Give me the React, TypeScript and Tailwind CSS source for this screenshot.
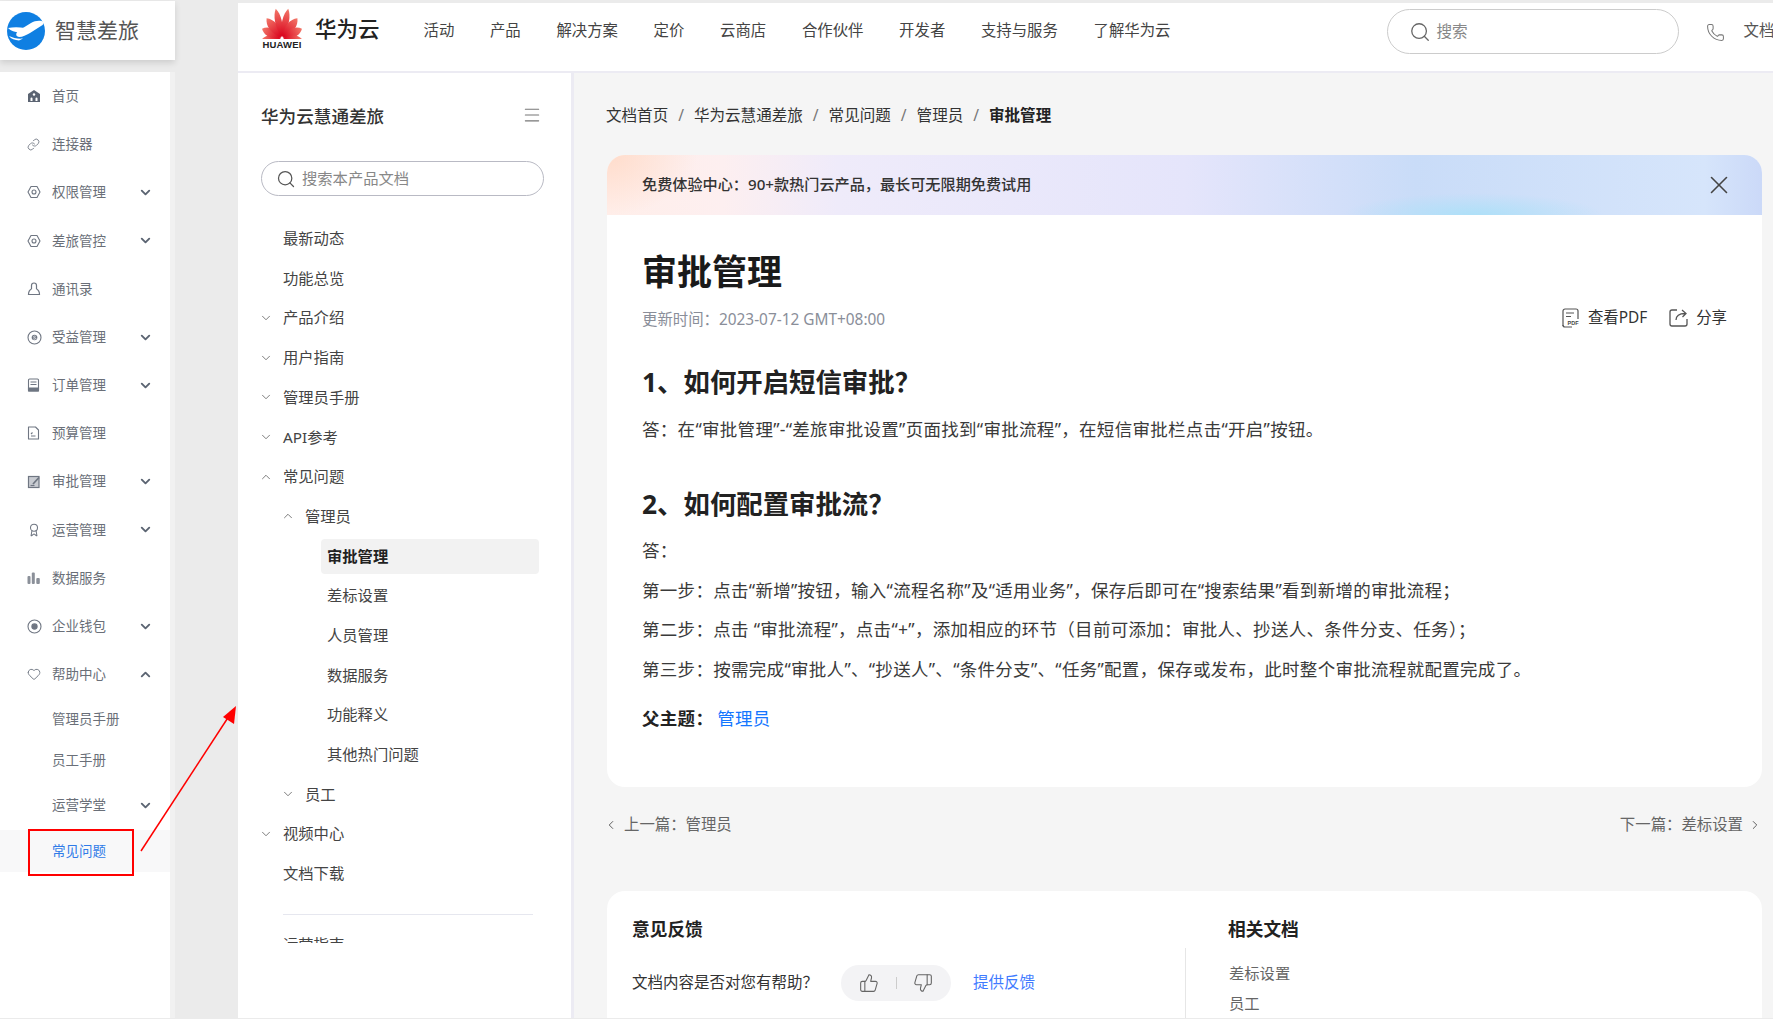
import { ReactNode } from "react";
import { ChevronDown, ChevronLeft, ChevronRight, ChevronUp, Heart, Link as LinkIcon, Award, Menu, Phone, Search, ThumbsDown, ThumbsUp, X } from "lucide-react";

const stroke = "#6f7682";

const HexIcon = () => (
  <svg width="14" height="14" viewBox="0 0 14 14" fill="none" stroke={stroke} strokeWidth="1.1">
    <path d="M4 1.5h6l3 5.5-3 5.5H4L1 7z" strokeLinejoin="round" />
    <circle cx="7" cy="7" r="2" />
  </svg>
);

const navIcons: Record<string, ReactNode> = {
  home: (
    <svg width="14" height="14" viewBox="0 0 14 14">
      <path d="M7 1 13 5v8H1V5z" fill="#5b6472" />
      <circle cx="7" cy="5.5" r="1.2" fill="#fff" />
      <path d="M3.5 12V9.5a1 1 0 0 1 2 0V12zM8.5 12V9.5a1 1 0 0 1 2 0V12z" fill="#fff" />
    </svg>
  ),
  link: <LinkIcon size={13} color={stroke} strokeWidth={1.6} />,
  hex: <HexIcon />,
  contact: (
    <svg width="14" height="14" viewBox="0 0 14 14" fill="none" stroke={stroke} strokeWidth="1.2">
      <path d="M4.5 7V3.5a2.5 2.5 0 0 1 5 0V7" />
      <path d="M4.5 7C2.5 8 1.5 9.5 1.5 12.5h11C12.5 9.5 11.5 8 9.5 7" />
    </svg>
  ),
  dollar: (
    <svg width="15" height="15" viewBox="0 0 15 15" fill="none" stroke={stroke}>
      <circle cx="7.5" cy="7.5" r="6.5" strokeWidth="1.1" />
      <circle cx="7.5" cy="7.5" r="2.8" fill={stroke} stroke="none" />
      <path d="M8.8 6.5c-.5-.6-2.4-.6-2.4.4s2.4.5 2.4 1.5-2 1-2.6.3" stroke="#fff" strokeWidth=".7" />
    </svg>
  ),
  order: (
    <svg width="13" height="14" viewBox="0 0 13 14" fill="none" stroke={stroke} strokeWidth="1.1">
      <rect x="1.5" y="1" width="10" height="12" rx="1" />
      <path d="M3.5 4h6M3.5 6.5h6" />
      <path d="M1.5 10h10v3h-10z" fill={stroke} />
    </svg>
  ),
  budget: (
    <svg width="13" height="14" viewBox="0 0 13 14" fill="none" stroke={stroke} strokeWidth="1.1">
      <path d="M1.5 1h7l3 3v9h-10z" strokeLinejoin="round" />
      <path d="M4 10h4.5M4 8l1.5-1.5" />
    </svg>
  ),
  approve: (
    <svg width="14" height="14" viewBox="0 0 14 14" fill="none" stroke={stroke} strokeWidth="1.2">
      <rect x="1.5" y="1.5" width="10.5" height="11" fill="#c9ccd2" />
      <path d="M6 9l6-6.5" strokeWidth="1.8" />
      <path d="M3.5 10.5h4" />
    </svg>
  ),
  award: <Award size={14} color={stroke} strokeWidth={1.8} />,
  data: (
    <svg width="14" height="14" viewBox="0 0 14 14" fill="#8b9099">
      <rect x=".5" y="5" width="3" height="8" rx="1" />
      <rect x="4.8" y="1.5" width="3" height="11.5" rx="1" />
      <rect x="9.3" y="7" width="3.5" height="6" rx="1" />
    </svg>
  ),
  wallet: (
    <svg width="15" height="15" viewBox="0 0 15 15" fill="none" stroke={stroke} strokeWidth="1.1">
      <circle cx="7.5" cy="7.5" r="6.5" />
      <circle cx="7.5" cy="7.5" r="2.6" fill={stroke} />
    </svg>
  ),
  heart: <Heart size={14} color={stroke} strokeWidth={1.6} />,
};

const navItems = [
  { label: "首页", icon: "home" },
  { label: "连接器", icon: "link" },
  { label: "权限管理", icon: "hex", more: true },
  { label: "差旅管控", icon: "hex", more: true },
  { label: "通讯录", icon: "contact" },
  { label: "受益管理", icon: "dollar", more: true },
  { label: "订单管理", icon: "order", more: true },
  { label: "预算管理", icon: "budget" },
  { label: "审批管理", icon: "approve", more: true },
  { label: "运营管理", icon: "award", more: true },
  { label: "数据服务", icon: "data" },
  { label: "企业钱包", icon: "wallet", more: true },
];

const topLinks = ["活动", "产品", "解决方案", "定价", "云商店", "合作伙伴", "开发者", "支持与服务", "了解华为云"];

const tree = [
  { label: "最新动态", depth: 0 },
  { label: "功能总览", depth: 0 },
  { label: "产品介绍", depth: 0, arrow: "down" },
  { label: "用户指南", depth: 0, arrow: "down" },
  { label: "管理员手册", depth: 0, arrow: "down" },
  { label: "API参考", depth: 0, arrow: "down" },
  { label: "常见问题", depth: 0, arrow: "up" },
  { label: "管理员", depth: 1, arrow: "up" },
  { label: "审批管理", depth: 2, active: true },
  { label: "差标设置", depth: 2 },
  { label: "人员管理", depth: 2 },
  { label: "数据服务", depth: 2 },
  { label: "功能释义", depth: 2 },
  { label: "其他热门问题", depth: 2 },
  { label: "员工", depth: 1, arrow: "down" },
  { label: "视频中心", depth: 0, arrow: "down" },
  { label: "文档下载", depth: 0 },
];

const crumbs = ["文档首页", "华为云慧通差旅", "常见问题", "管理员"];

const petals = [
  { rot: -93, len: 20, w: 5 },
  { rot: -65, len: 22, w: 6.5 },
  { rot: -38, len: 25, w: 6.5 },
  { rot: -12, len: 30, w: 5 },
  { rot: 12, len: 30, w: 5 },
  { rot: 38, len: 25, w: 6.5 },
  { rot: 65, len: 22, w: 6.5 },
  { rot: 93, len: 20, w: 5 },
];

function HuaweiLogo() {
  return (
    <svg width="42" height="31" viewBox="0 0 42 31">
      <defs>
        <linearGradient id="petal" x1="0" y1="0" x2="0" y2="1">
          <stop offset="0" stopColor="#f3796a" />
          <stop offset="1" stopColor="#d9001b" />
        </linearGradient>
      </defs>
      {petals.map((p) => (
        <path
          key={p.rot}
          transform={`translate(21 30) rotate(${p.rot})`}
          d={`M0 -1 C${-p.w} ${-p.len * 0.42} ${-p.w * 0.8} ${-p.len * 0.8} 0 ${-p.len} C${p.w * 0.8} ${-p.len * 0.8} ${p.w} ${-p.len * 0.42} 0 -1Z`}
          fill="url(#petal)"
        />
      ))}
    </svg>
  );
}

function PlaneLogo() {
  return (
    <svg width="38" height="38" viewBox="0 0 38 38">
      <circle cx="19" cy="19" r="19" fill="#0f7fe2" />
      <path d="M36.5 10C34 8 28 8.5 24 11L11 19C9 21 8 24 12 25C16 25 19 23 23 21L34 14C36 13 37 11.5 36.5 10Z" fill="#fff" />
      <path d="M1 16C6 15 12 15 18 16L12 20.5C8 20 4 19 1 16Z" fill="#fff" />
      <path d="M2 24C6 26 11 27 16 26.5L12 28.5C8 28 4 27 2 24Z" fill="#fff" />
    </svg>
  );
}

function PdfIcon() {
  return (
    <svg width="19" height="20" viewBox="0 0 19 20" fill="none" stroke="#555" strokeWidth="1.2">
      <path d="M2 18V3a2 2 0 0 1 2-2h11a2 2 0 0 1 2 2v10" />
      <path d="M5 5h8M5 8.5h5" />
      <path d="M2 17a2 2 0 0 0 2 2h7" />
      <rect x="6" y="11" width="12" height="7" fill="#fff" stroke="none" />
      <text x="6.5" y="17" fontSize="5.5" fontWeight="700" fill="#444" stroke="none" fontFamily="Liberation Sans">PDF</text>
    </svg>
  );
}

function ShareIcon() {
  return (
    <svg width="20" height="20" viewBox="0 0 20 20" fill="none" stroke="#555" strokeWidth="1.3">
      <path d="M8 2H3a2 2 0 0 0-2 2v12a2 2 0 0 0 2 2h13a2 2 0 0 0 2-2v-5" />
      <path d="M7 12c0-4 3-6.5 9-6.5M13 2l4 3.5-3.5 3.5" />
    </svg>
  );
}

function Sidebar() {
  return (
    <div className="flex w-[175px] shrink-0 flex-col">
      <div className="mt-px flex h-[59px] items-center bg-white pl-[7px] shadow-[0_3px_6px_rgba(0,0,0,0.12)]">
        <PlaneLogo />
        <span className="ml-[10px] text-[21px] text-[#555]">智慧差旅</span>
      </div>
      <div className="mt-3 h-[946px] border-r-[5px] border-[#f1f1f1] bg-white text-[13.5px] text-[#6a6f78]">
        {navItems.map((item) => (
          <div key={item.label} className="flex h-[48.2px] items-center pr-[17px] pl-[27px]">
            <span className="flex w-[25px] items-center">{navIcons[item.icon]}</span>
            <span>{item.label}</span>
            {item.more && <ChevronDown className="ml-auto" size={15} color="#5b6472" strokeWidth={3} />}
          </div>
        ))}
        <div className="flex h-[48.2px] items-center pr-[17px] pl-[27px]">
          <span className="flex w-[25px] items-center">{navIcons.heart}</span>
          <span>帮助中心</span>
          <ChevronUp className="ml-auto" size={15} color="#5b6472" strokeWidth={3} />
        </div>
        <div className="flex h-[41px] items-center pl-[52px]">管理员手册</div>
        <div className="flex h-[41px] items-center pl-[52px]">员工手册</div>
        <div className="flex h-[50px] items-center pr-[17px] pl-[52px]">
          运营学堂
          <ChevronDown className="ml-auto" size={15} color="#5b6472" strokeWidth={3} />
        </div>
        <div className="flex h-[42px] items-center bg-[#f8f8f9] pl-[52px] text-[#2f7be8]">常见问题</div>
      </div>
    </div>
  );
}

function TopBar() {
  return (
    <div className="flex h-[70px] shrink-0 items-start border-b-2 border-[#ecebf3] bg-white pl-[23px]">
      <div className="mt-[5px] flex shrink-0 flex-col items-center">
        <HuaweiLogo />
        <span className="mt-px text-[9.5px] leading-[10px] font-bold tracking-[0.2px] text-[#222] [font-family:'Liberation_Sans',sans-serif]">HUAWEI</span>
      </div>
      <span className="mt-[9px] ml-[12px] shrink-0 text-[21.5px] leading-[34px] font-medium whitespace-nowrap text-[#222]">华为云</span>
      <div className="mt-[16px] ml-[44px] flex shrink-0 gap-[35.65px] text-[15.4px] leading-[24px] text-[#444]">
        {topLinks.map((t) => (
          <span key={t} className="whitespace-nowrap">{t}</span>
        ))}
      </div>
      <div className="mt-[6px] ml-[216px] flex h-[45px] w-[292px] shrink-0 items-center rounded-full border border-[#ccc] pl-[21px] text-[15.6px] text-[#888]">
        <Search size={22} color="#666" strokeWidth={1.4} />
        <span className="ml-[6px]">搜索</span>
      </div>
      <Phone className="mt-[20px] ml-[27px] shrink-0" size={19} color="#777" strokeWidth={1.3} />
      <span className="mt-[16px] ml-[19px] shrink-0 text-[15.4px] leading-[24px] whitespace-nowrap text-[#555]">文档</span>
    </div>
  );
}

function DocTree() {
  return (
    <div className="w-[336px] shrink-0 border-r-[3px] border-[#ecebf3] bg-white">
      <div className="mt-[29px] flex h-[28px] items-center justify-between pr-[29px] pl-[23px]">
        <span className="text-[17.6px] font-medium text-[#333]">华为云慧通差旅</span>
        <Menu className="-mt-[2px]" size={20} color="#777" strokeWidth={1.3} />
      </div>
      <div className="mt-[31px] ml-[23px] flex h-[35px] w-[283px] items-center rounded-full border border-[#b9bac4] pl-[13.5px] text-[15.3px] text-[#888]">
        <Search size={20} color="#555" strokeWidth={1.5} />
        <span className="ml-[6.5px]">搜索本产品文档</span>
      </div>
      <div className="mt-[22.7px] h-[724px] overflow-hidden text-[15.3px] text-[#444]">
        {tree.map((row) => (
          <div key={row.label} className="flex h-[39.7px] items-center">
            {row.depth === 0 && <span className="w-[22px]" />}
            {row.depth === 1 && <span className="w-[44px]" />}
            {row.depth === 2 && <span className="w-[89px]" />}
            {row.arrow && (
              <span className="-ml-px w-[24px] shrink-0">
                {row.arrow === "down" ? <ChevronDown size={14} color="#555" strokeWidth={1.3} /> : <ChevronUp size={14} color="#555" strokeWidth={1.3} />}
              </span>
            )}
            {!row.arrow && row.depth === 0 && <span className="w-[23px]" />}
            {row.active ? (
              <span className="-ml-[6px] flex h-[35px] w-[218px] items-center rounded bg-[#f2f2f2] pl-[6px] font-bold text-[#222]">{row.label}</span>
            ) : (
              <span>{row.label}</span>
            )}
          </div>
        ))}
        <div className="mt-[21px] ml-[45px] h-px w-[250px] bg-[#e6e7ef]" />
        <div className="mt-[18px] ml-[45px]">运营指南</div>
      </div>
    </div>
  );
}

function Article() {
  const bodyText = "text-[17.5px] leading-[28px] tracking-[0.3px] text-[#3a3a3a]";
  return (
    <div className="rounded-[18px] bg-white">
      <div className="flex h-[60px] items-center justify-between rounded-t-[18px] bg-[radial-gradient(ellipse_90px_60px_at_0_0,#ffdccb,transparent),radial-gradient(ellipse_130px_22px_at_75%_100%,#aee0f8,transparent),linear-gradient(90deg,#ffeee9_0%,#fdeff0_10%,#efebfa_20%,#e5e5fb_50%,#c9dcf8_70%,#d6e5fb_95%,#cbd9f8_100%)] pr-[28px] pl-[35px]">
        <span className="-mt-[2px] text-[15.15px] font-medium text-[#333]">免费体验中心：90+款热门云产品，最长可无限期免费试用</span>
        <X size={30} color="#444" strokeWidth={1.3} />
      </div>
      <div className="px-[35px] pt-[34.5px] pb-[55px]">
        <h1 className="h-[46px] text-[35px] leading-[46px] font-bold text-[#1a1a1a]">审批管理</h1>
        <div className="mt-[12.5px] flex h-[24px] items-center justify-between text-[15.4px]">
          <span className="text-[#8a8e99]">更新时间：2023-07-12 GMT+08:00</span>
          <div className="-mt-[4px] flex items-center text-[15.4px] text-[#333]">
            <PdfIcon />
            <span className="ml-2">查看PDF</span>
            <span className="ml-[22px]"><ShareIcon /></span>
            <span className="ml-[7px]">分享</span>
          </div>
        </div>
        <h2 className="mt-[32px] h-[36px] text-[26.4px] leading-[36px] font-bold text-[#222]">1、如何开启短信审批？</h2>
        <p className={`mt-[15px] h-[28px] ${bodyText}`}>答：在“审批管理”-“差旅审批设置”页面找到“审批流程”，在短信审批栏点击“开启”按钮。</p>
        <h2 className="mt-[43px] h-[36px] text-[26.4px] leading-[36px] font-bold text-[#222]">2、如何配置审批流？</h2>
        <p className={`mt-[14px] h-[28px] ${bodyText}`}>答：</p>
        <p className={`mt-[11.6px] h-[28px] ${bodyText}`}>第一步：点击“新增”按钮，输入“流程名称”及“适用业务”，保存后即可在“搜索结果”看到新增的审批流程；</p>
        <p className={`mt-[11.6px] h-[28px] ${bodyText}`}>第二步：点击 “审批流程”，点击“+”，添加相应的环节（目前可添加：审批人、抄送人、条件分支、任务）；</p>
        <p className={`mt-[11.6px] h-[28px] ${bodyText}`}>第三步：按需完成“审批人”、“抄送人”、“条件分支”、“任务”配置，保存或发布，此时整个审批流程就配置完成了。</p>
        <p className={`mt-[21px] h-[28px] ${bodyText}`}>
          <b className="font-bold text-[#222]">父主题：</b>
          <span className="ml-1 text-[#1476ff]">管理员</span>
        </p>
      </div>
    </div>
  );
}

function Feedback() {
  return (
    <div className="mt-[54px] flex rounded-t-[18px] bg-white pt-6">
      <div className="w-[578px] shrink-0 pl-[25px]">
        <div className="h-[28px] text-[17.7px] leading-[28px] font-bold text-[#222]">意见反馈</div>
        <div className="mt-[22px] flex h-[36px] items-center text-[15.5px] text-[#333]">
          <span className="w-[209px]">文档内容是否对您有帮助？</span>
          <div className="flex h-[36px] w-[110px] items-center justify-between rounded-full bg-[#f3f3f5] px-[18px]">
            <ThumbsUp size={20} color="#666" strokeWidth={1.3} />
            <span className="h-[12px] w-px bg-[#ccc]" />
            <ThumbsDown size={20} color="#666" strokeWidth={1.3} />
          </div>
          <span className="ml-[22px] text-[#3f7bff]">提供反馈</span>
        </div>
      </div>
      <div className="flex-1">
        <div className="h-[28px] pl-[43px] text-[17.7px] leading-[28px] font-bold text-[#222]">相关文档</div>
        <div className="mt-[5px] h-[80px] border-l border-[#e6e6e6] pt-[10px] pl-[43px] text-[15.3px] leading-[30px] text-[#666]">
          <div>差标设置</div>
          <div>员工</div>
        </div>
      </div>
    </div>
  );
}

export default function App() {
  return (
    <div className="relative flex h-[1019px] w-[1773px] overflow-hidden bg-[#ebebeb] [font-family:'Noto_Sans','Noto_Sans_CJK_SC',sans-serif]">
      <Sidebar />
      <div className="ml-[63px] flex h-[1018px] w-[1535px] flex-col overflow-hidden pt-[3px]">
        <TopBar />
        <div className="flex flex-1">
          <DocTree />
          <div className="flex-1 bg-[#f5f5f5] pt-[30.7px] pr-[11px] pl-[33px]">
            <div className="-ml-px flex h-[24px] items-center gap-[10px] text-[15.55px] text-[#333]">
              {crumbs.map((c) => (
                <span key={c} className="flex items-center gap-[10px]">
                  {c}
                  <span className="text-[#777]">/</span>
                </span>
              ))}
              <span className="font-bold text-[#222]">审批管理</span>
            </div>
            <div className="mt-[27.3px]">
              <Article />
            </div>
            <div className="mt-[26px] flex h-[24px] items-center justify-between text-[15.4px] text-[#666]">
              <span className="flex items-center">
                <ChevronLeft className="-ml-[3px]" size={14} color="#555" strokeWidth={1.6} />
                <span className="ml-[6px]">上一篇：管理员</span>
              </span>
              <span className="flex items-center">
                <span className="mr-[5px]">下一篇：差标设置</span>
                <ChevronRight size={14} color="#555" strokeWidth={1.6} />
              </span>
            </div>
            <Feedback />
          </div>
        </div>
      </div>

      {/* annotation drawn over the screenshot */}
      <div className="absolute top-[829px] left-[28px] h-[47px] w-[106px] border-2 border-[#ff0000]" />
      <svg className="absolute top-[695px] left-[130px]" width="120" height="165" viewBox="0 0 120 165">
        <path d="M11 156 101 18" stroke="#ff0000" strokeWidth="1.5" />
        <path d="M106 11 104 29 93 22z" fill="#ff0000" />
      </svg>
    </div>
  );
}
